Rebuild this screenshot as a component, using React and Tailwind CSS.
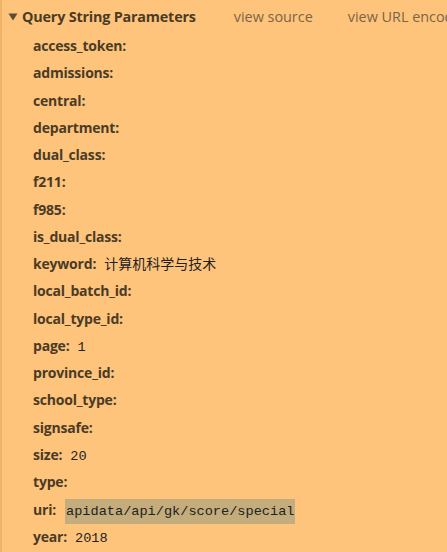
import React from "react";

const rows = [
  ["access_token", ""],
  ["admissions", ""],
  ["central", ""],
  ["department", ""],
  ["dual_class", ""],
  ["f211", ""],
  ["f985", ""],
  ["is_dual_class", ""],
  ["keyword", "计算机科学与技术", "cjk"],
  ["local_batch_id", ""],
  ["local_type_id", ""],
  ["page", "1"],
  ["province_id", ""],
  ["school_type", ""],
  ["signsafe", ""],
  ["size", "20"],
  ["type", ""],
  ["uri", "apidata/api/gk/score/special", "hl"],
  ["year", "2018"],
];

export default function App() {
  return (
    <div className="w-[447px] h-[552px] overflow-hidden bg-[#ffc47b] border-l-2 border-[#f0b468] text-[#4a3b26]" style={{ fontFamily: '"Open Sans", sans-serif' }}>
      <div className="flex items-center h-[33px] whitespace-nowrap">
        <svg className="ml-[6px] mr-[4px] shrink-0" width="10" height="8" viewBox="0 0 10 8">
          <path d="M0.5 0.5 L9.5 0.5 L5 7.5 Z" fill="#5c4c36" />
        </svg>
        <span className="shrink-0 font-bold text-[14.4px] tracking-[-0.2px]">Query String Parameters</span>
        <span className="shrink-0 ml-[38px] text-[14.4px] text-[#7a6548]">view source</span>
        <span className="shrink-0 ml-[35px] text-[14.4px] text-[#7a6548]">view URL encoded</span>
      </div>
      <div className="flex flex-col pl-[31px]">
        {rows.map(([k, v, t]) => (
          <div key={k} className="flex items-baseline h-[27.28px] pt-[2px] whitespace-nowrap">
            <span className="shrink-0 font-bold text-[14px] tracking-[-0.2px]">{k}:</span>
            {v && (
              t === "cjk" ? (
                <span className="shrink-0 ml-[8px] text-[14px] text-[#222]" style={{ fontFamily: '"Noto Sans CJK SC", sans-serif' }}>{v}</span>
              ) : (
                <span className={"shrink-0 text-[13.6px] text-[#222] px-[1px] " + (t === "hl" ? "ml-[9px] bg-[#c4ac7c] leading-[25px]" : "ml-[7px]")} style={{ fontFamily: '"Liberation Mono", monospace' }}>{v}</span>
              )
            )}
          </div>
        ))}
      </div>
    </div>
  );
}
